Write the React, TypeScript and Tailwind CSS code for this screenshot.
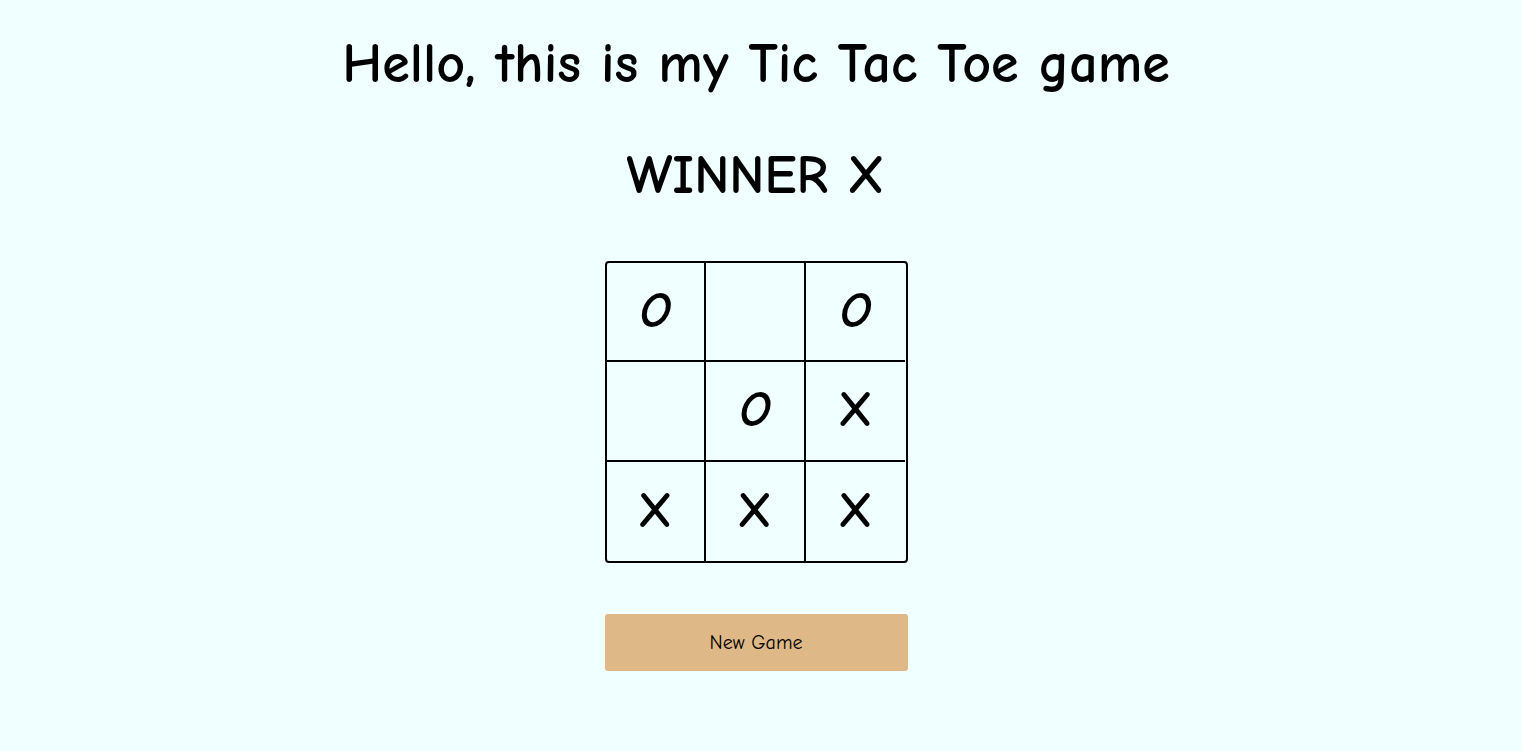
import React from "react";

const board: string[] = ["O", "", "O", "", "O", "X", "X", "X", "X"];

export default function App() {
  return (
    <div className="min-h-[751px] w-full bg-[#f0ffff] text-black">
      <div
        className="w-[1512px] flex flex-col items-center"
        style={{ fontFamily: '"Comic Sans MS", "Comic Neue", "Open Sans", sans-serif' }}
      >
        <h1 className="mt-[32px] text-[56px] font-bold leading-[64px]">Hello, this is my Tic Tac Toe game</h1>
        <h2 className="mt-[46px] text-[54px] font-bold leading-[68px]">WINNER X</h2>
        <div className="mt-[51px] w-[303px] h-[302px] border-2 border-black rounded-[4px] grid grid-cols-3 grid-rows-3 overflow-hidden">
          {board.map((v, i) => (
            <div
              key={i}
              className={`flex items-center justify-center text-[50px] font-bold ${v === "O" ? "italic" : ""} ${i % 3 !== 2 ? "border-r-2" : ""} ${i < 6 ? "border-b-2" : ""} border-black`}
            >
              {v}
            </div>
          ))}
        </div>
        <button className="mt-[51px] w-[303px] h-[57px] bg-[#deb887] rounded-[3px] text-[20px]">New Game</button>
      </div>
    </div>
  );
}
